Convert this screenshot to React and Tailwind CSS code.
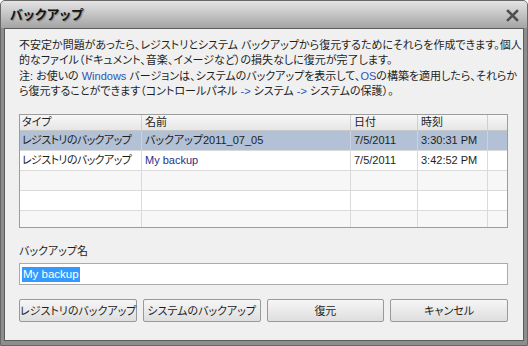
import React from "react";

const rows = [
  { type: "レジストリのバックアップ", name: "バックアップ2011_07_05", date: "7/5/2011", time: "3:30:31 PM", sel: true },
  { type: "レジストリのバックアップ", name: "My backup", date: "7/5/2011", time: "3:42:52 PM", blue: true },
  {},
  {},
  {},
];

function Row({ r, i }) {
  const bg = r.sel ? "bg-[#b2c1d5]" : i % 2 === 0 ? "bg-[#f7f7f7]" : "bg-white";
  const line = r.sel ? "border-[#c9d2de]" : "border-[#dadada]";
  return (
    <div className={`flex h-[20px] shrink-0 border-b border-[#dadada] ${bg}`}>
      <div className={`w-[122px] shrink-0 overflow-hidden border-r ${line} pl-[2px] leading-[19px] whitespace-nowrap tracking-[-0.6px]`}>{r.type}</div>
      <div className={`w-[209px] shrink-0 overflow-hidden border-r ${line} pl-[3px] leading-[19px] whitespace-nowrap ${r.blue ? "text-[#26318c]" : ""}`}>{r.name}</div>
      <div className={`w-[67px] shrink-0 overflow-hidden border-r ${line} pl-[3px] leading-[19px] whitespace-nowrap`}>{r.date}</div>
      <div className={`w-[70px] shrink-0 overflow-hidden border-r ${line} pl-[3px] leading-[19px] whitespace-nowrap`}>{r.time}</div>
      <div className="flex-1" />
    </div>
  );
}

export default function App() {
  const blue = "text-[#2b54b8]";
  return (
    <div className="w-[528px] h-[346px] [font-family:'Liberation_Sans','Noto_Sans_CJK_JP',sans-serif] [font-feature-settings:'palt'] text-[11px] text-[#1e1e1e]">
      <div className="flex flex-col w-full h-full rounded-t-[5px] border border-[#676767] bg-[#8d8d8d] overflow-hidden">
        <div className="h-[27px] shrink-0 flex items-center justify-between pl-[9px] pr-[8px] bg-gradient-to-b from-[#e4e4e4] via-[#c4c4c4] to-[#a4a4a4]">
          <span className="font-bold text-[13px] text-[#141414] [text-shadow:1px_1px_1px_rgba(90,90,90,0.6)] tracking-[0.5px]">バックアップ</span>
          <svg width="13" height="13" viewBox="0 0 13 13" className="mt-[1px]">
            <path d="M2 2 L11 11 M11 2 L2 11" stroke="#4e4e4e" strokeWidth="2.6" strokeLinecap="square" />
          </svg>
        </div>
        <div className="flex-1 min-h-0 px-[3px] pb-[4px] flex">
          <div className="flex-1 min-w-0 overflow-hidden flex flex-col border border-[#5c5c5c] bg-[#f0f0f0] pl-[14px] pr-[15px] pt-[9px]">
            <div className="leading-[15px] whitespace-nowrap">
              <div>不安定か問題があったら、レジストリとシステム バックアップから復元するためにそれらを作成できます。個人</div>
              <div>的なファイル（ドキュメント、音楽、イメージなど）の損失なしに復元が完了します。</div>
            </div>
            <div className="leading-[15px] whitespace-nowrap mt-[1px]">
              <div>注: お使いの <span className={blue}>Windows</span> バージョンは、システムのバックアップを表示して、<span className={blue}>OS</span>の構築を適用したら、それらか</div>
              <div>ら復元することができます（コントロールパネル <span className={blue}>-&gt;</span> システム <span className={blue}>-&gt;</span> システムの保護）。</div>
            </div>

            <div className="mt-[15px] h-[114px] shrink-0 flex flex-col border border-[#9c9c9c] bg-white overflow-hidden">
              <div className="flex h-[16px] shrink-0 border-b border-[#c8c8c8] bg-gradient-to-b from-[#f7f7f7] to-[#e6e6e6]">
                <div className="w-[122px] shrink-0 border-r border-[#cfcfcf] pl-[2px] leading-[15px]">タイプ</div>
                <div className="w-[209px] shrink-0 border-r border-[#cfcfcf] pl-[3px] leading-[15px]">名前</div>
                <div className="w-[67px] shrink-0 border-r border-[#cfcfcf] pl-[3px] leading-[15px]">日付</div>
                <div className="w-[70px] shrink-0 border-r border-[#cfcfcf] pl-[3px] leading-[15px]">時刻</div>
                <div className="flex-1" />
              </div>
              {rows.map((r, i) => (
                <Row key={i} r={r} i={i} />
              ))}
            </div>

            <div className="mt-[16px] leading-[15px]">バックアップ名</div>
            <div className="mt-[4px] h-[22px] shrink-0 flex items-center border border-[#ababab] bg-white pl-[2px]">
              <span className="bg-[#3399ff] text-white text-[11.5px] leading-[15px] px-[1px]">My backup</span>
            </div>

            <div className="mt-[14px] flex gap-[6px]">
              {["レジストリのバックアップ", "システムのバックアップ", "復元", "キャンセル"].map((t) => (
                <button
                  key={t}
                  className="flex-1 w-0 min-w-0 h-[23px] rounded-[2px] border border-[#999999] bg-gradient-to-b from-[#f6f6f6] to-[#dedede] text-[11px] text-[#1e1e1e] leading-[20px] whitespace-nowrap"
                >
                  {t}
                </button>
              ))}
            </div>
          </div>
        </div>
      </div>
    </div>
  );
}
